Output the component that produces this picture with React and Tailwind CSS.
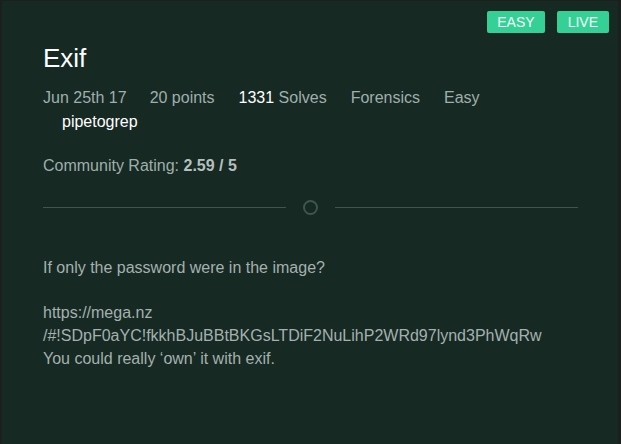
export default function App() {
  return (
    <div className="w-[621px] h-[444px] bg-[#1b1f1e] pl-[2px] pt-[1px] pr-[3px] overflow-hidden" style={{ fontFamily: '"Liberation Sans", Arial, sans-serif' }}>
      <div className="h-[460px] bg-[#162923] relative">
        <div className="absolute top-[10px] right-[9px] flex gap-[12px]">
          <span className="bg-[#35d095] text-[#f4fffb] text-[14px] leading-[22px] px-[10px] rounded-[2px]">EASY</span>
          <span className="bg-[#35d095] text-[#f4fffb] text-[14px] leading-[22px] px-[11px] rounded-[2px]">LIVE</span>
        </div>
        <div className="pl-[41px] pr-[40px] pt-[42px]">
          <h1 className="text-[26px] leading-[30px] text-white">Exif</h1>
          <div className="mt-[13px] flex flex-wrap text-[16px] leading-[24px] text-[#9fafab]">
            <span className="mr-[23px]">Jun 25th 17</span>
            <span className="mr-[24px]">20 points</span>
            <span className="mr-[24px]"><span className="text-white">1331</span> Solves</span>
            <span className="mr-[24px]">Forensics</span>
            <span className="mr-[24px]">Easy</span>
            <span className="ml-[19px] text-white">pipetogrep</span>
          </div>
          <div className="mt-[20px] text-[16px] leading-[24px] text-[#9fafab]">
            Community Rating: <b className="font-bold text-[#b4c0bd]">2.59 / 5</b>
          </div>
          <div className="mt-[22px] flex items-center">
            <div className="h-px flex-1 bg-[#3f554f]"></div>
            <div className="mx-[17px] w-[15px] h-[15px] rounded-full border-2 border-[#3f554f]"></div>
            <div className="h-px flex-1 bg-[#3f554f]"></div>
          </div>
          <div className="mt-[41px] text-[16px] leading-[23px] text-[#a4b1ae]">
            <p>If only the password were in the image?</p>
            <p className="mt-[22px]">https://mega.nz<br />/#!SDpF0aYC!fkkhBJuBBtBKGsLTDiF2NuLihP2WRd97lynd3PhWqRw<br />You could really ‘own’ it with exif.</p>
          </div>
        </div>
      </div>
    </div>
  );
}
